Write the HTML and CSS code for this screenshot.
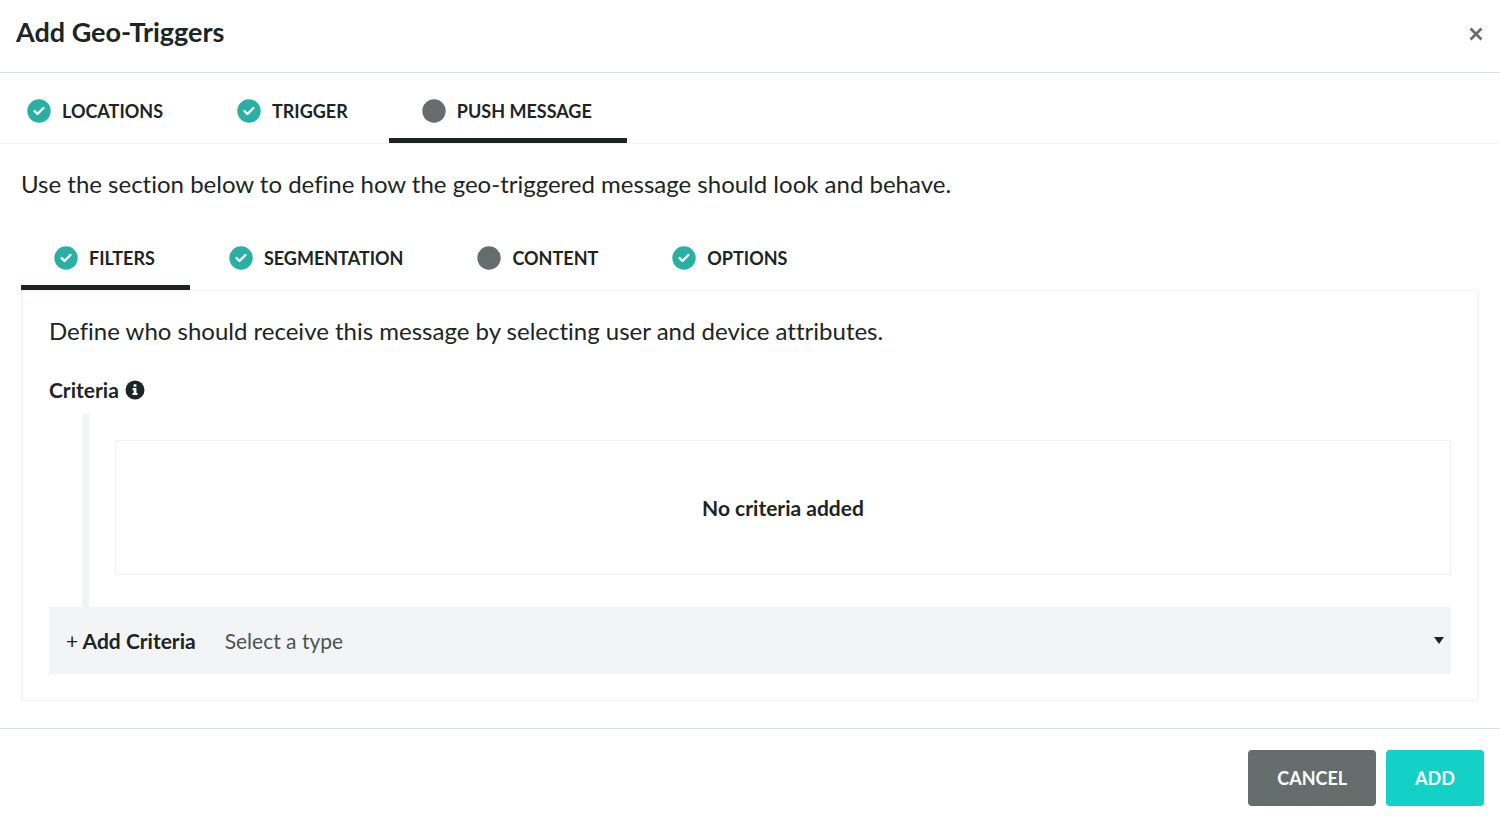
FILE: index.html
```html
<!DOCTYPE html>
<html lang="en">
<head>
<meta charset="utf-8">
<title>Add Geo-Triggers</title>
<meta name="viewport" content="width=device-width, initial-scale=1">
<link rel="stylesheet" href="styles.css">
</head>
<body>
<svg class="sprite" aria-hidden="true">
  <symbol id="done" viewBox="0 0 24 24">
    <circle cx="12" cy="12" r="11.7" fill="#29afa4"/>
    <path d="M7.6 12.1l2.9 2.9 5.9-6" fill="none" stroke="#fff" stroke-width="2.4" stroke-linecap="round" stroke-linejoin="round"/>
  </symbol>
  <symbol id="pending" viewBox="0 0 24 24">
    <circle cx="12" cy="12" r="11.7" fill="#656e6d"/>
  </symbol>
</svg>
<div class="dialog" role="dialog" aria-labelledby="dialog-title">
  <header class="dialog-header">
    <h1 id="dialog-title" class="title">Add Geo-Triggers</h1>
    <button class="close" type="button" aria-label="Close">
      <svg width="14" height="14" viewBox="0 0 14 14" aria-hidden="true"><path d="M1.5 1.5l11 11M12.5 1.5l-11 11" stroke="#656e6d" stroke-width="2.8" fill="none"/></svg>
    </button>
  </header>

  <nav class="tabs tabs-main" role="tablist" aria-label="Steps">
    <button class="tab" type="button" role="tab"><svg class="status" aria-hidden="true"><use href="#done"/></svg>LOCATIONS</button>
    <button class="tab" type="button" role="tab"><svg class="status" aria-hidden="true"><use href="#done"/></svg>TRIGGER</button>
    <button class="tab active" type="button" role="tab" aria-selected="true"><svg class="status" aria-hidden="true"><use href="#pending"/></svg>PUSH MESSAGE</button>
  </nav>

  <main class="body">
    <p class="lead">Use the section below to define how the geo-triggered message should look and behave.</p>

    <nav class="tabs" role="tablist" aria-label="Message sections">
      <button class="tab active" type="button" role="tab" aria-selected="true"><svg class="status" aria-hidden="true"><use href="#done"/></svg>FILTERS</button>
      <button class="tab" type="button" role="tab"><svg class="status" aria-hidden="true"><use href="#done"/></svg>SEGMENTATION</button>
      <button class="tab" type="button" role="tab"><svg class="status" aria-hidden="true"><use href="#pending"/></svg>CONTENT</button>
      <button class="tab" type="button" role="tab"><svg class="status" aria-hidden="true"><use href="#done"/></svg>OPTIONS</button>
    </nav>

    <section class="panel" role="tabpanel">
      <p class="lead">Define who should receive this message by selecting user and device attributes.</p>
      <h2 class="criteria-title">Criteria
        <svg class="info" viewBox="0 0 20 20" aria-hidden="true"><circle cx="10" cy="10" r="9.5" fill="#1b2524"/><path d="M8.7 4.3h2.7v2.4H8.7zM7.6 8.1h3.8v5h1.1v1.8H7.5v-1.8h1.1V9.9h-1z" fill="#fff"/></svg>
      </h2>
      <div class="criteria-tree">
        <div class="empty">No criteria added</div>
      </div>
      <div class="add-row">
        <label class="add-label" for="type"><span class="plus">+</span> Add Criteria</label>
        <select class="type" id="type"><option>Select a type</option></select>
        <svg class="caret" viewBox="0 0 10 7" aria-hidden="true"><path d="M0 0h10L5 7z" fill="#1b2524"/></svg>
      </div>
    </section>
  </main>

  <footer class="dialog-footer">
    <button class="btn btn-cancel" type="button">CANCEL</button>
    <button class="btn btn-add" type="button">ADD</button>
  </footer>
</div>
</body>
</html>
```
FILE: styles.css
```css
* {
  box-sizing: border-box;
}

body {
  margin: 0;
  background: #fff;
  color: #1b2524;
  font-family: Lato, "Open Sans", sans-serif;
  font-variant-ligatures: none;
}

h1, h2, p {
  margin: 0;
}

button, select {
  font: inherit;
  color: inherit;
  border: 0;
  background: none;
  margin: 0;
}

.sprite {
  position: absolute;
  width: 0;
  height: 0;
}

.dialog-header {
  display: flex;
  justify-content: space-between;
  align-items: center;
  padding: 16px 17px 24px 16px;
  border-bottom: 1px solid #d9e2e2;
}

.title {
  font-size: 27px;
  line-height: 32px;
  font-weight: 700;
}

.close {
  display: flex;
  padding: 4px 0 0;
}

.tabs {
  display: flex;
  gap: 6px;
}

.tabs-main {
  border-bottom: 1px solid #f3f4f6;
}

.tabs-main .tab:first-child {
  padding-left: 27px;
}

.tab {
  display: flex;
  align-items: center;
  gap: 11px;
  padding: 24px 35px 13px 33px;
  border-bottom: 5px solid transparent;
  font-size: 18px;
  line-height: 28px;
  font-weight: 700;
}

.tab.active {
  border-bottom-color: #1b2524;
}

.status {
  width: 24px;
  height: 24px;
  flex: none;
}

.body {
  padding: 24px 21px 27px;
}

.body > .lead {
  margin-bottom: 20px;
}

.lead {
  font-size: 24px;
  line-height: 32px;
}

.panel {
  border: 1px solid #f3f4f6;
  border-width: 1px 2px;
  padding: 24px 26px 26px;
}

.criteria-title {
  display: flex;
  align-items: center;
  gap: 6px;
  margin: 29px 0 10px;
  font-size: 21px;
  line-height: 28px;
  font-weight: 700;
}

.info {
  width: 20px;
  height: 20px;
}

.criteria-tree {
  margin-left: 33px;
  padding: 26px 0 32px 26px;
  border-left: 7px solid #f3f4f6;
}

.empty {
  padding: 52px 16px;
  border: 1px solid #f1f2f3;
  text-align: center;
  font-size: 21px;
  line-height: 29px;
  font-weight: 700;
}

.add-row {
  display: flex;
  align-items: center;
  padding: 0 7px 0 17px;
  background: #f3f4f6;
}

.add-label {
  font-size: 21px;
  line-height: 28px;
  font-weight: 700;
  margin-right: 29px;
}

.plus {
  font-weight: 400;
}

.type {
  appearance: none;
  flex: 1;
  height: 67px;
  padding: 0;
  font-size: 21px;
  color: #4a5452;
}

.caret {
  width: 10px;
  height: 7px;
}

.dialog-footer {
  display: flex;
  justify-content: flex-end;
  gap: 10px;
  padding: 21px 16px 12px;
  border-top: 1px solid #d9e2e2;
}

.btn {
  padding: 14px 29px;
  border-radius: 4px;
  color: #fff;
  font-size: 18px;
  line-height: 28px;
  font-weight: 700;
}

.btn-cancel {
  background: #656e6d;
}

.btn-add {
  background: #13d1c6;
}
```
